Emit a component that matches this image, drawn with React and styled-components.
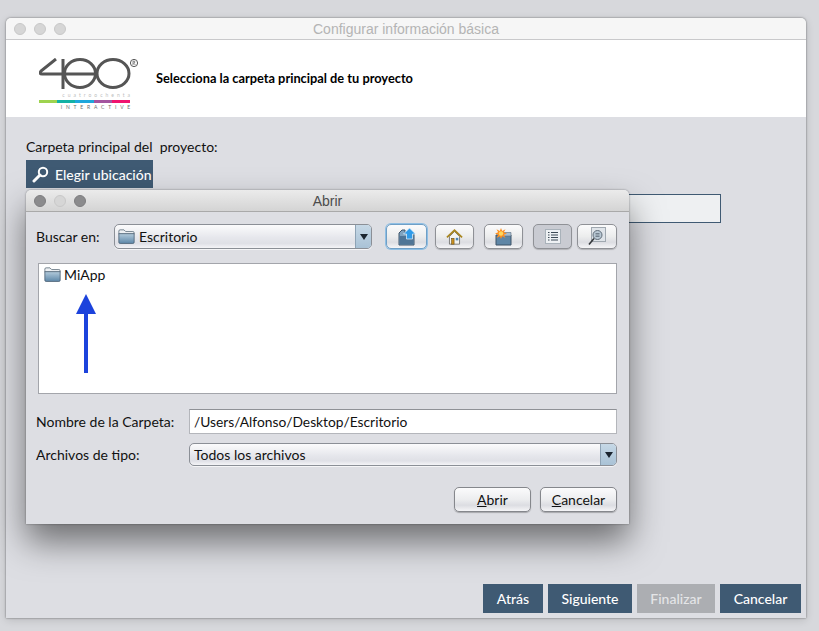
import React from "react"
import styled, { createGlobalStyle } from "styled-components"

const Global = createGlobalStyle`
    html, body {
        margin: 0;
        height: 631px;
        overflow: hidden;
        background: #d7d8dc;
        font-family: "Lato", "Liberation Sans", sans-serif;
    }
    * { box-sizing: border-box; }
`

const Page = styled.div`
    width: 819px;
    height: 631px;
    padding: 18px 13px 13px 6px;
`

const Window = styled.div`
    position: relative;
    width: 800px;
    height: 600px;
    display: flex;
    flex-direction: column;
    background: #dddee3;
    border-radius: 5px 5px 0 0;
    box-shadow: 0 0 2px rgba(0, 0, 0, .55), 0 2px 8px rgba(0, 0, 0, .14);
`

const TitleBar = styled.div`
    position: relative;
    height: 22px;
    flex: none;
    display: flex;
    align-items: center;
    justify-content: center;
    background: ${p => p.$dialog ? "linear-gradient(#ebebeb, #d4d4d4)" : "#f6f6f6"};
    border-bottom: 1px solid ${p => p.$dialog ? "#a9a9a9" : "#c9c9cb"};
    border-radius: 5px 5px 0 0;
    font-family: "Liberation Sans", sans-serif;
    font-size: 14px;
    color: ${p => p.$dialog ? "#4c4c4c" : "#b4b4b4"};
`

const Lights = styled.div`
    position: absolute;
    left: 8px;
    top: 5px;
    display: flex;
    gap: 8px;
`

const Light = styled.span`
    width: 12px;
    height: 12px;
    border-radius: 50%;
    background: ${p => p.$on ? "#8b8b8d" : "#d6d6d6"};
    border: 1px solid ${p => p.$on ? "#7d7d7f" : "#c8c8c8"};
`

const Header = styled.div`
    height: 77px;
    flex: none;
    display: flex;
    align-items: center;
    gap: 15px;
    padding: 0 0 2px 33px;
    background: #fff;
`

const Logo = styled.div`
    position: relative;
    width: 102px;
    align-self: flex-start;
    display: flex;
    flex-direction: column;
    margin-top: 18px;
`

const LogoTiny = styled.span`
    align-self: flex-end;
    font-size: 5px;
    line-height: 7px;
    letter-spacing: ${p => p.$wide ? "3.8px" : "3px"};
    margin-right: ${p => p.$wide ? "7px" : "8px"};
    color: ${p => p.$wide ? "#6d6d6d" : "#bdbdbd"};
    white-space: nowrap;
`

const LogoBar = styled.div`
    width: 91px;
    height: 3px;
    margin: 1px 0 1px;
    background: linear-gradient(90deg,
        #9ed34f 0 20%, #13b2a5 20% 40%, #1fa7dc 40% 60%, #a4549f 60% 80%, #f0136f 80% 100%);
`

const HeaderTitle = styled.div`
    font-size: 12.8px;
    font-weight: 700;
    color: #000;
`

const Content = styled.div`
    flex: 1;
    display: flex;
    flex-direction: column;
    padding: 20px 20px 5px;
`

const FieldLabel = styled.div`
    font-size: 14px;
    line-height: 20px;
    color: #111;
    white-space: pre;
`

const PickButton = styled.div`
    width: 127px;
    height: 28px;
    margin-top: 3px;
    display: flex;
    align-items: center;
    gap: 6px;
    padding-left: 6px;
    background: #3f5a73;
    color: #fff;
    font-size: 14px;
    font-weight: 500;
`

const PathBox = styled.div`
    width: 695px;
    height: 29px;
    margin-top: 6px;
    background: #eef0f2;
    border: 1px solid #3f5a73;
`

const Footer = styled.div`
    margin-top: auto;
    margin-right: -15px;
    display: flex;
    justify-content: flex-end;
    gap: 5px;
`

const WizardButton = styled.div`
    width: ${p => p.$w}px;
    height: 29px;
    display: flex;
    align-items: center;
    justify-content: center;
    background: ${p => p.$off ? "#acaeb2" : "#3f5a73"};
    color: ${p => p.$off ? "#e4e5e7" : "#fff"};
    font-size: 14px;
    font-weight: 500;
`

const Dialog = styled.div`
    position: absolute;
    left: 20px;
    top: 172px;
    width: 603px;
    height: 334px;
    display: flex;
    flex-direction: column;
    background: #dddee3;
    border-radius: 5px 5px 0 0;
    box-shadow: 0 0 2px rgba(0, 0, 0, .45), 0 18px 34px rgba(0, 0, 0, .5);
`

const DialogBody = styled.div`
    flex: 1;
    display: flex;
    flex-direction: column;
    padding: 12px 12px 12px 10px;
    font-size: 14px;
    color: #111;
`

const ToolRow = styled.div`
    display: flex;
    align-items: center;
    height: 25px;
`

const RowLabel = styled.div`
    width: ${p => p.$w}px;
    flex: none;
    white-space: nowrap;
`

const Combo = styled.div`
    display: flex;
    align-items: stretch;
    flex: ${p => p.$grow ? "1" : "none"};
    width: ${p => p.$grow ? "auto" : "258px"};
    height: ${p => p.$h}px;
    overflow: hidden;
    background: linear-gradient(#fbfbfc, #e6e7ec 55%, #dfe0e6 80%, #f4f4f7);
    border: 1px solid #8b8f96;
    border-radius: 5px;
    box-shadow: 0 1px 0 rgba(255, 255, 255, .7);
`

const ComboValue = styled.div`
    flex: 1;
    display: flex;
    align-items: center;
    gap: 4px;
    padding-left: ${p => p.$pad}px;
    color: #111;
`

const ComboArrow = styled.div`
    width: 16px;
    display: flex;
    align-items: center;
    justify-content: center;
    background: linear-gradient(#c6d8e6, #a9c2d6);
    border-left: 1px solid #8ea3b5;

    &::after {
        content: "";
        border-left: 4.5px solid transparent;
        border-right: 4.5px solid transparent;
        border-top: 6px solid #1b2530;
    }
`

const IconButton = styled.div`
    width: ${p => p.$w}px;
    height: 25px;
    margin-left: ${p => p.$gap}px;
    display: flex;
    align-items: center;
    justify-content: center;
    border-radius: 5px;
    border: 1px solid ${p => p.$focus ? "#6f9fc6" : "#8f9196"};
    background: ${p => p.$pressed
        ? "#c9cbd2"
        : "linear-gradient(#fbfbfc, #eceded 50%, #dcdde2 75%, #f5f5f7)"};
    box-shadow: ${p => p.$focus ? "0 0 0 1px #8fbfe4" : "0 1px 1px rgba(0, 0, 0, .2)"};
`

const ListBox = styled.div`
    height: 131px;
    margin: 14px 0 0 2px;
    padding: 2px 5px;
    background: #fff;
    border: 1px solid #a3a5ab;
`

const ListItem = styled.div`
    position: relative;
    display: flex;
    align-items: center;
    gap: 3px;
    height: 17px;
    color: #111;
`

const Arrow = styled.svg`
    position: absolute;
    left: 32px;
    top: 28px;
`

const FormRow = styled.div`
    display: flex;
    align-items: center;
    margin-top: ${p => p.$top}px;
`

const NameInput = styled.div`
    flex: 1;
    height: 25px;
    display: flex;
    align-items: center;
    padding-left: 4px;
    font-size: 13.8px;
    background: #fff;
    border: 1px solid #b4b6bb;
    border-top-color: #8f9196;
`

const Actions = styled.div`
    display: flex;
    justify-content: flex-end;
    gap: 9px;
    margin-top: auto;
`

const ActionButton = styled.div`
    width: 77px;
    height: 25px;
    display: flex;
    align-items: center;
    justify-content: center;
    border: 1px solid #85878c;
    border-radius: 5px;
    background: linear-gradient(#fbfbfc, #ecedef 50%, #dcdde2 75%, #f5f5f7);
    box-shadow: 0 1px 1px rgba(0, 0, 0, .25);
`

const FolderIcon = ({ size = 17 }) => (
    <svg width={size} height={size * 0.9} viewBox="0 0 20 18">
        <defs>
            <linearGradient id="fold" x1="0" y1="0" x2="0" y2="1">
                <stop offset="0" stopColor="#b3cbdc" />
                <stop offset="1" stopColor="#5d87a8" />
            </linearGradient>
        </defs>
        <path d="M1 4 V2.5 Q1 1 2.5 1 H7 L9 3 H17.5 Q19 3 19 4.5 V6 H1 Z" fill="#eef1f4" stroke="#62727f" />
        <path d="M1 5.5 H19 V15.5 Q19 17 17.5 17 H2.5 Q1 17 1 15.5 Z" fill="url(#fold)" stroke="#4f6477" />
    </svg>
)

const UpIcon = () => (
    <svg width="18" height="18" viewBox="0 0 18 18">
        <path d="M1 5 L4 2 H7 V5 H16 V17 H1 Z" fill="#7fa3bf" stroke="#3f5469" />
        <path d="M1.5 8 H15.5 V16.5 H1.5 Z" fill="#4f7596" />
        <path d="M11.5 0 L17.5 6 H14.5 V11 H8.5 V6 H5.5 Z" fill="#2f9be8" stroke="#e8f4fc" strokeWidth=".7" />
    </svg>
)

const HomeIcon = () => (
    <svg width="17" height="16" viewBox="0 0 20 19">
        <path d="M4 9 V18 H16 V9 L10 3 Z" fill="#f4f4f0" stroke="#4a4a48" strokeWidth=".8" />
        <path d="M1 10 L10 1.5 L19 10" fill="none" stroke="#a9861f" strokeWidth="2" />
        <rect x="6.5" y="11" width="3" height="7" fill="#c98f1e" stroke="#5a4310" strokeWidth=".6" />
        <rect x="11.5" y="10.5" width="3" height="3" fill="#4a86b8" />
    </svg>
)

const NewFolderIcon = () => (
    <svg width="17" height="18" viewBox="0 0 17 18">
        <path d="M1 7 H16 V17 H1 Z" fill="#5f86a6" stroke="#3f5469" />
        <path d="M8 4.5 H16 V8 H8 Z" fill="#a8bfd2" stroke="#5a6d7e" strokeWidth=".6" />
        <path
            d="M6 0 L7.2 3 L10.5 1.2 L8.8 4.2 L12 5.5 L8.8 6.8 L10.5 10 L7.2 8.2 L6 11 L4.8 8.2 L1.5 10 L3.2 6.8 L0 5.5 L3.2 4.2 L1.5 1.2 L4.8 3 Z"
            fill="#ff8f1f"
        />
        <circle cx="6" cy="5.5" r="2.2" fill="#ffd75e" />
    </svg>
)

const ListIcon = () => (
    <svg width="16" height="15" viewBox="0 0 16 15">
        <rect x=".5" y=".5" width="15" height="14" fill="#eef1f4" stroke="#a9b2ba" />
        <path d="M3 3.5 H4.5 M6 3.5 H13 M3 6 H4.5 M6 6 H13 M3 8.5 H4.5 M6 8.5 H13 M3 11 H4.5 M6 11 H13" stroke="#3c4a56" />
    </svg>
)

const DetailIcon = () => (
    <svg width="18" height="19" viewBox="0 0 18 19">
        <rect x="3.5" y=".5" width="14" height="14" fill="#dfe4e9" stroke="#a0a8b0" />
        <circle cx="9.5" cy="8" r="4.5" fill="#b9c8d4" stroke="#5f6c78" />
        <path d="M7.5 6.5 H11.5 M7.5 8 H11.5 M7.5 9.5 H11.5" stroke="#55626e" strokeWidth=".7" />
        <path d="M6 11.5 L1 17.5" stroke="#33373b" strokeWidth="1.6" />
    </svg>
)

function App() {
    return (
        <Page>
            <Global />
            <Window>
                <TitleBar>
                    <Lights>
                        <Light />
                        <Light />
                        <Light />
                    </Lights>
                    Configurar información básica
                </TitleBar>
                <Header>
                    <Logo>
                        <svg width="102" height="34" viewBox="0 0 102 34" fill="none" stroke="#555" strokeWidth="3">
                            <path d="M17 1 L2 13 Q0 16 3 16 H56" />
                            <path d="M24 1 V31" />
                            <ellipse cx="41" cy="15.5" rx="15.5" ry="14" />
                            <ellipse cx="74" cy="15.5" rx="16" ry="14" />
                            <circle cx="95" cy="5" r="3.6" strokeWidth="1" />
                            <path d="M94 7 V3.2 H95.6 Q96.6 4.6 94.6 5 L96.4 7" strokeWidth=".7" />
                        </svg>
                        <LogoTiny>cuatroochenta</LogoTiny>
                        <LogoBar />
                        <LogoTiny $wide>INTERACTIVE</LogoTiny>
                    </Logo>
                    <HeaderTitle>Selecciona la carpeta principal de tu proyecto</HeaderTitle>
                </Header>
                <Content>
                    <FieldLabel>Carpeta principal del  proyecto:</FieldLabel>
                    <PickButton>
                        <svg width="17" height="17" viewBox="0 0 17 17" fill="none" stroke="#fff">
                            <circle cx="11" cy="6" r="4.2" strokeWidth="2" />
                            <path d="M8 9 L2 15" strokeWidth="3" strokeLinecap="round" />
                        </svg>
                        Elegir ubicación
                    </PickButton>
                    <PathBox />
                    <Footer>
                        <WizardButton $w={60}>Atrás</WizardButton>
                        <WizardButton $w={84}>Siguiente</WizardButton>
                        <WizardButton $w={78} $off>Finalizar</WizardButton>
                        <WizardButton $w={81}>Cancelar</WizardButton>
                    </Footer>
                </Content>
                <Dialog>
                    <TitleBar $dialog>
                        <Lights>
                            <Light $on />
                            <Light />
                            <Light $on />
                        </Lights>
                        Abrir
                    </TitleBar>
                    <DialogBody>
                        <ToolRow>
                            <RowLabel $w={78}>Buscar en:</RowLabel>
                            <Combo $h={25}>
                                <ComboValue $pad={3}>
                                    <FolderIcon />
                                    Escritorio
                                </ComboValue>
                                <ComboArrow />
                            </Combo>
                            <IconButton $w={41} $gap={14} $focus><UpIcon /></IconButton>
                            <IconButton $w={39} $gap={8}><HomeIcon /></IconButton>
                            <IconButton $w={39} $gap={10}><NewFolderIcon /></IconButton>
                            <IconButton $w={39} $gap={10} $pressed><ListIcon /></IconButton>
                            <IconButton $w={40} $gap={5}><DetailIcon /></IconButton>
                        </ToolRow>
                        <ListBox>
                            <ListItem>
                                <FolderIcon />
                                MiApp
                                <Arrow width="20" height="79" viewBox="0 0 20 79">
                                    <path d="M10 0 L20 20 H12 V79 H8 V20 H0 Z" fill="#1c43dc" />
                                </Arrow>
                            </ListItem>
                        </ListBox>
                        <FormRow $top={15}>
                            <RowLabel $w={153}>Nombre de la Carpeta:</RowLabel>
                            <NameInput>/Users/Alfonso/Desktop/Escritorio</NameInput>
                        </FormRow>
                        <FormRow $top={9}>
                            <RowLabel $w={153}>Archivos de tipo:</RowLabel>
                            <Combo $grow $h={23}>
                                <ComboValue $pad={4}>Todos los archivos</ComboValue>
                                <ComboArrow />
                            </Combo>
                        </FormRow>
                        <Actions>
                            <ActionButton><span><u>A</u>brir</span></ActionButton>
                            <ActionButton><span><u>C</u>ancelar</span></ActionButton>
                        </Actions>
                    </DialogBody>
                </Dialog>
            </Window>
        </Page>
    )
}

export default App
